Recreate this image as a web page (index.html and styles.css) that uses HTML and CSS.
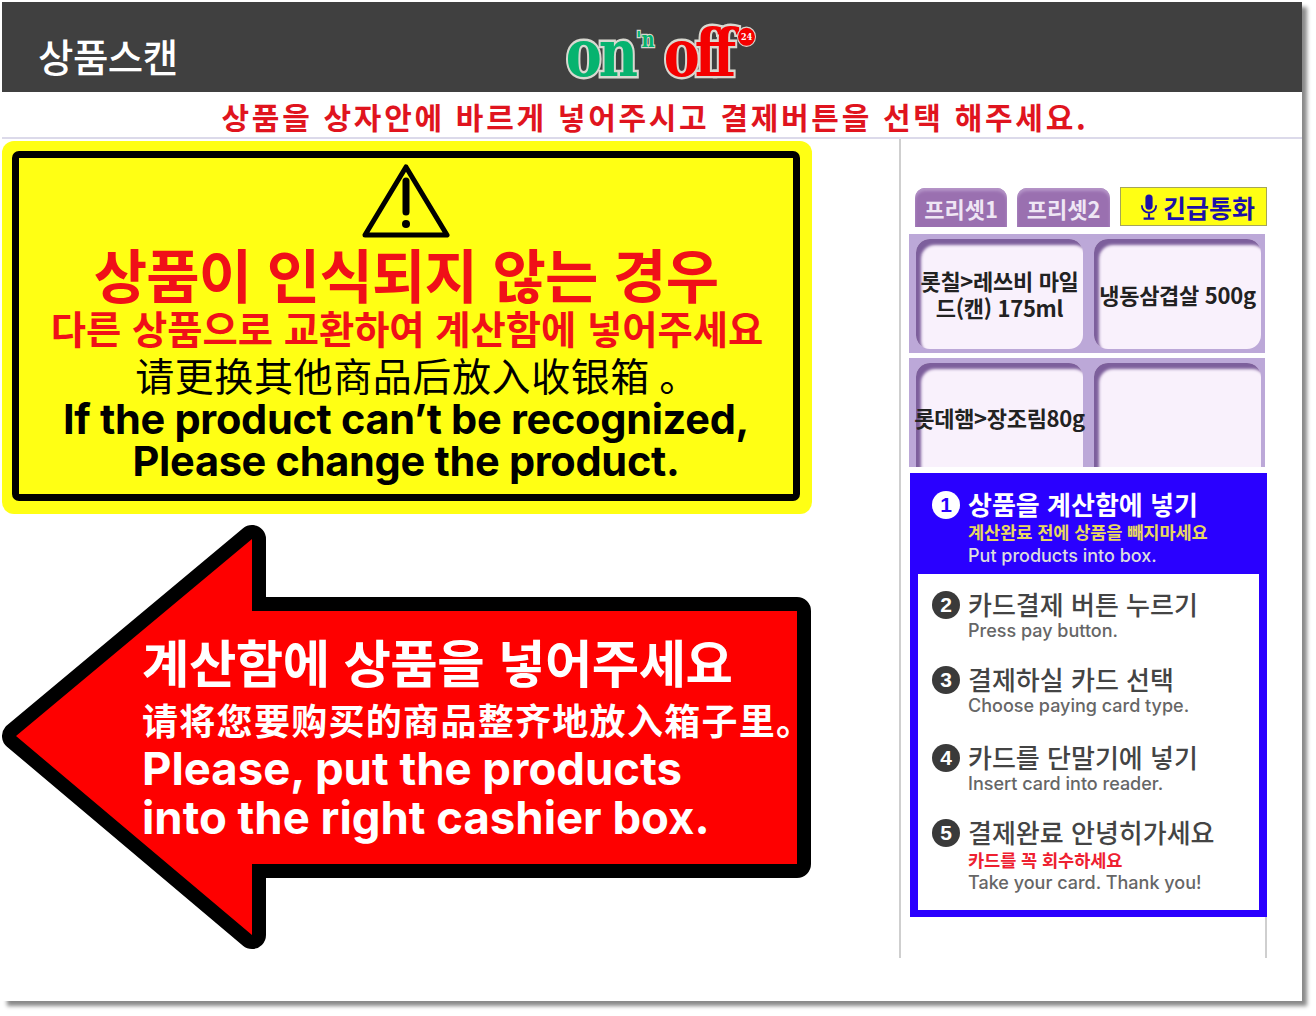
FILE: index.html
```html
<!DOCTYPE html>
<html lang="ko">
<head>
  <meta charset="UTF-8" />
  <title>상품스캔</title>
  <link rel="stylesheet" href="styles.css">
</head>
<body>

<div class="window">
  <header class="topbar">
    <h1 class="title">상품스캔</h1>
    <div class="logo">
      <span class="logo-on">on</span><span class="logo-n">'n</span><span class="logo-off">off</span><span class="logo-24">24</span>
    </div>
  </header>

  <div class="notice">상품을 상자안에 바르게 넣어주시고 결제버튼을 선택 해주세요.</div>

  <main class="content">
    <section class="left">
      <div class="warn-card">
        <div class="warn-inner">
          <svg class="warn-icon" viewBox="0 0 90 78" width="90" height="78">
            <path d="M45 5 L86 73 H4 Z" fill="none" stroke="#000" stroke-width="5" stroke-linejoin="round"/>
            <path d="M45 19 V50" stroke="#000" stroke-width="7" stroke-linecap="round"/>
            <circle cx="45" cy="62" r="4" fill="#000"/>
          </svg>
          <div class="warn-big">상품이 인식되지 않는 경우</div>
          <div class="warn-mid">다른 상품으로 교환하여 계산함에 넣어주세요</div>
          <div class="warn-zh" lang="zh-CN">请更换其他商品后放入收银箱 。</div>
          <div class="warn-en">If the product can’t be recognized,</div>
          <div class="warn-en">Please change the product.</div>
        </div>
      </div>

      <div class="arrow">
        <svg class="arrow-shape" viewBox="0 0 810 426" width="810" height="426">
          <path d="M14 212 L250 15 V87 H795 V340 H250 V411 Z" fill="#fe0000" stroke="#000" stroke-width="28" stroke-linejoin="round" paint-order="stroke"/>
        </svg>
        <div class="arrow-text">
          <div class="arrow-big">계산함에 상품을 넣어주세요</div>
          <div class="arrow-zh" lang="zh-CN">请将您要购买的商品整齐地放入箱子里。</div>
          <div class="arrow-en">Please, put the products</div>
          <div class="arrow-en">into the right cashier box.</div>
        </div>
      </div>
    </section>

    <aside class="side">
      <div class="tabs">
        <button class="tab">프리셋1</button>
        <button class="tab">프리셋2</button>
        <button class="tab-call">
          <svg viewBox="0 0 20 30" width="18" height="28">
            <rect x="6" y="1" width="8" height="17" rx="4" fill="#1c10a8"/>
            <path d="M2 13 C2 24 18 24 18 13" fill="none" stroke="#1c10a8" stroke-width="2"/>
            <path d="M10 22 V27 M4 28 H16" stroke="#1c10a8" stroke-width="2.4"/>
          </svg>
          긴급통화
        </button>
      </div>

      <div class="presets">
        <div class="preset"><div class="preset-in">롯칠&gt;레쓰비 마일드(캔) 175ml</div></div>
        <div class="preset"><div class="preset-in">냉동삼겹살 500g</div></div>
        <div class="preset preset-low"><div class="preset-in">롯데햄&gt;장조림80g</div></div>
        <div class="preset preset-low"><div class="preset-in"></div></div>
      </div>

      <div class="steps">
        <div class="step step-now">
          <span class="num">1</span>
          <div>
            <div class="step-head">상품을 계산함에 넣기</div>
            <div class="step-warn">계산완료 전에 상품을 빼지마세요</div>
            <div class="step-en">Put products into box.</div>
          </div>
        </div>
        <div class="steps-rest">
          <div class="step">
            <span class="num">2</span>
            <div>
              <div class="step-head">카드결제 버튼 누르기</div>
              <div class="step-en">Press pay button.</div>
            </div>
          </div>
          <div class="step">
            <span class="num">3</span>
            <div>
              <div class="step-head">결제하실 카드 선택</div>
              <div class="step-en">Choose paying card type.</div>
            </div>
          </div>
          <div class="step step-drop">
            <span class="num">4</span>
            <div>
              <div class="step-head">카드를 단말기에 넣기</div>
              <div class="step-en">Insert card into reader.</div>
            </div>
          </div>
          <div class="step">
            <span class="num">5</span>
            <div>
              <div class="step-head">결제완료 안녕히가세요</div>
              <div class="step-warn step-red">카드를 꼭 회수하세요</div>
              <div class="step-en">Take your card. Thank you!</div>
            </div>
          </div>
        </div>
      </div>
      <div class="side-tail"></div>
    </aside>
  </main>
</div>

</body>
</html>
```

FILE: styles.css
```css
* { box-sizing: border-box; }
html, body {
  margin: 0;
  height: 100%;
  background-color: #fff;
  font-family: "Noto Sans CJK KR", "Noto Sans", sans-serif;
}
body { padding: 2px 0 0 2px; }
.window {
  width: 1300px;
  height: 999px;
  background-color: #fff;
  box-shadow: 5px 5px 4px #8a8a8a;
  overflow: hidden;
}

/* top bar */
.topbar {
  height: 90px;
  background-color: #404040;
  position: relative;
  display: flex;
  align-items: center;
  justify-content: center;
}
.title {
  position: absolute;
  left: 36px;
  top: 26px;
  margin: 0;
  font-size: 38.5px;
  line-height: 54px;
  font-weight: 500;
  letter-spacing: -0.5px;
  color: #fff;
}
.logo {
  display: flex;
  align-items: flex-start;
  height: 60px;
  margin: 12px 0 0 18px;
  font-family: "DejaVu Serif", serif;
  font-weight: bold;
  transform: scaleY(1.2);
  -webkit-text-stroke: 4px #d8d8d0;
}
.logo span { paint-order: stroke fill; }
.logo-on { font-size: 54px; line-height: 60px; letter-spacing: -3px; color: #06b36f; }
.logo-n { font-size: 18px; line-height: 26px; margin: 6px 9px 0 1px; color: #06b36f; -webkit-text-stroke: 2px #d8d8d0; }
.logo-off { font-size: 54px; line-height: 60px; letter-spacing: -5px; color: #f40000; }
.logo-24 {
  width: 19px;
  height: 17px;
  margin: 8px 0 0 6px;
  border-radius: 50%;
  background-color: #f40000;
  border: 1px solid #d8d8d0;
  font-size: 8px;
  line-height: 15px;
  text-align: center;
  color: #fff;
  -webkit-text-stroke: 0;
}

/* notice */
.notice {
  height: 47px;
  padding-left: 6px;
  border-bottom: 2px solid #dcdaea;
  text-align: center;
  font-size: 30px;
  line-height: 48px;
  font-weight: 700;
  letter-spacing: 2.7px;
  color: #e0141e;
}

.content {
  display: flex;
  height: 862px;
}

/* left column */
.left {
  width: 810px;
  padding-top: 2px;
  display: flex;
  flex-direction: column;
  gap: 10px;
}
.warn-card {
  height: 373px;
  padding: 10px 12px 10px 10px;
  background-color: #ffff14;
  border-radius: 12px;
}
.warn-inner {
  height: 350px;
  border: 7px solid #000;
  border-radius: 7px;
  display: flex;
  flex-direction: column;
  align-items: center;
  text-align: center;
  white-space: nowrap;
}
.warn-icon { margin-top: 4px; flex: none; }
.warn-big {
  font-size: 58px;
  line-height: 66px;
  font-weight: 700;
  letter-spacing: -0.8px;
  color: #f01018;
}
.warn-mid {
  font-size: 38.3px;
  line-height: 44px;
  padding-left: 2px;
  font-weight: 700;
  color: #f01018;
}
.warn-zh {
  font-family: "Noto Sans CJK SC", sans-serif;
  font-size: 39px;
  line-height: 48px;
  padding-left: 22px;
  letter-spacing: 0.6px;
  color: #000;
}
.warn-en {
  font-family: Inter, "Liberation Sans", sans-serif;
  font-size: 41.5px;
  line-height: 42px;
  font-weight: 700;
  letter-spacing: -0.3px;
  color: #000;
}

/* arrow */
.arrow {
  position: relative;
  height: 426px;
}
.arrow-shape { display: block; overflow: visible; }
.arrow-text {
  position: absolute;
  left: 140px;
  top: 104px;
  white-space: nowrap;
  color: #fff;
}
.arrow-big {
  font-size: 51.5px;
  line-height: 66px;
  font-weight: 700;
  letter-spacing: -0.5px;
}
.arrow-zh {
  font-family: "Noto Sans CJK SC", sans-serif;
  font-size: 36px;
  line-height: 50px;
  letter-spacing: 1.3px;
  font-weight: 700;
}
.arrow-en {
  font-family: Inter, "Liberation Sans", sans-serif;
  font-size: 45.5px;
  line-height: 49px;
  font-weight: 700;
}

/* right column */
.side {
  width: 368px;
  margin-left: 87px;
  border-left: 2px solid #cfcfcf;
  height: 819px;
  padding: 48px 0 0 8px;
  display: flex;
  flex-direction: column;
}
.tabs {
  display: flex;
  align-items: flex-start;
  gap: 10px;
  padding-left: 6px;
  height: 47px;
}
.tab {
  width: 93px;
  height: 39px;
  margin-top: 1px;
  padding: 0;
  border: none;
  border-radius: 10px 10px 0 0;
  background-color: #9a70b0;
  box-shadow: inset 0 3px 3px #b595c8;
  font-family: inherit;
  font-size: 22px;
  font-weight: 700;
  color: #efe6f4;
}
.tab-call {
  width: 148px;
  height: 39px;
  padding: 0 0 0 8px;
  border: 1px solid #a5a55a;
  background-color: #ffff14;
  display: flex;
  align-items: center;
  justify-content: center;
  gap: 5px;
  font-family: inherit;
  font-size: 25px;
  font-weight: 700;
  color: #1c10a8;
}

.presets {
  display: grid;
  grid-template-columns: 178px 178px;
  grid-template-rows: 119px 109px;
  row-gap: 5px;
  width: 356px;
  height: 239px;
}
.preset {
  background-color: #bca8d8;
  padding: 5px 4px 4px 7px;
  overflow: hidden;
}
.preset-in {
  height: 110px;
  border-radius: 14px;
  background-color: #f9f1fc;
  box-shadow: inset 5px 6px 3px #7d5f9c;
  display: flex;
  align-items: center;
  justify-content: center;
  text-align: center;
  font-size: 22px;
  line-height: 27px;
  font-weight: 700;
  letter-spacing: -0.3px;
  color: #222;
}
.preset-low .preset-in {
  height: 130px;
  padding-bottom: 22px;
  white-space: nowrap;
}

.steps {
  width: 357px;
  height: 444px;
  margin-left: 1px;
  border: 8px solid #2a00ff;
  border-top: none;
  background-color: #2a00ff;
  flex: none;
}
.step {
  display: flex;
  align-items: flex-start;
  gap: 8px;
  padding-left: 14px;
}
.step-now {
  height: 101px;
  padding-top: 15px;
  color: #fff;
}
.steps-rest {
  height: 336px;
  padding-top: 14px;
  background-color: #fff;
  display: flex;
  flex-direction: column;
  gap: 21px;
}
.step-drop { margin-top: 3px; }
.num {
  flex: none;
  width: 28px;
  height: 28px;
  margin-top: 3px;
  border-radius: 50%;
  background-color: #3a3a3a;
  font-family: "Liberation Sans", sans-serif;
  font-size: 21px;
  line-height: 28px;
  font-weight: 700;
  text-align: center;
  color: #fff;
}
.step-now .num { background-color: #fff; color: #2a00ff; }
.step-head {
  font-size: 26px;
  line-height: 32px;
  font-weight: 500;
  color: #444;
  white-space: nowrap;
}
.step-now .step-head { color: #fff; font-weight: 700; }
.step-warn {
  font-size: 17.6px;
  line-height: 24px;
  letter-spacing: -0.1px;
  font-weight: 700;
  color: #e8d860;
}
.step-red { color: #ee2030; }
.step-en {
  font-family: Inter, "Liberation Sans", sans-serif;
  font-size: 18px;
  line-height: 22px;
  font-weight: 500;
  color: #666;
}
.step-now .step-en { margin-top: 1px; color: #ddd; }

.side-tail {
  flex: 1;
  width: 357px;
  margin-left: 1px;
  border-right: 2px solid #cfcfcf;
}
```
